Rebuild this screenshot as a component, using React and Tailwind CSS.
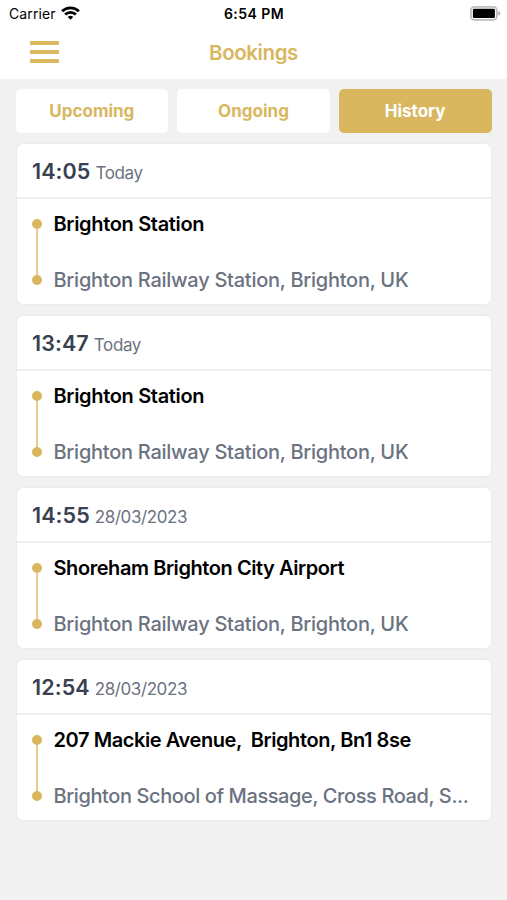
import React, { useState } from 'react';
import clsx from 'clsx';

const TABS = ['Upcoming', 'Ongoing', 'History'];

const BOOKINGS = [
  {
    id: 1,
    time: '14:05',
    date: 'Today',
    from: 'Brighton Station',
    to: 'Brighton Railway Station, Brighton, UK',
    fromTracking: 'tracking-[-0.33px]',
    toTracking: 'tracking-[-0.26px]',
  },
  {
    id: 2,
    time: '13:47',
    date: 'Today',
    from: 'Brighton Station',
    to: 'Brighton Railway Station, Brighton, UK',
    fromTracking: 'tracking-[-0.33px]',
    toTracking: 'tracking-[-0.26px]',
  },
  {
    id: 3,
    time: '14:55',
    date: '28/03/2023',
    from: 'Shoreham Brighton City Airport',
    to: 'Brighton Railway Station, Brighton, UK',
    fromTracking: 'tracking-[-0.43px]',
    toTracking: 'tracking-[-0.26px]',
  },
  {
    id: 4,
    time: '12:54',
    date: '28/03/2023',
    from: '207 Mackie Avenue,  Brighton, Bn1 8se',
    to: 'Brighton School of Massage, Cross Road, S...',
    fromTracking: 'tracking-[-0.42px]',
    toTracking: 'tracking-[-0.4px]',
  },
];

const WifiIcon = () => (
  <svg className="mb-[2px]" width="19" height="14" viewBox="0 0 19 14" fill="none" stroke="#000" strokeWidth="2.8">
    <path d="M1.1 5.3a11.9 11.9 0 0 1 16.8 0" />
    <path d="M4.1 8.6a7.7 7.7 0 0 1 10.8 0" />
    <path d="M9.5 13.8L6.7 10.9a4.2 4.2 0 0 1 5.6 0z" fill="#000" stroke="none" />
  </svg>
);

const BatteryIcon = () => (
  <svg width="31" height="15" viewBox="0 0 31 15">
    <rect x="0.9" y="0.9" width="26" height="13" rx="3.6" fill="#fff" stroke="#bdbdbd" strokeWidth="1.8" />
    <rect x="2.9" y="2.8" width="22" height="9.2" rx="1.2" fill="#000" />
    <path d="M28.4 5.2c1.2.4 1.8 1.2 1.8 2.2s-.6 1.8-1.8 2.2z" fill="#a6a6a6" />
  </svg>
);

const StatusBar = () => (
  <div className="grid h-[27px] grid-cols-3 items-center pl-[9px] pr-[6px] text-[14px] leading-[27px] text-black">
    <div className="flex items-center gap-[5.5px]">
      <span className="tracking-[0.1px]">Carrier</span>
      <WifiIcon />
    </div>
    <span className="pr-[2px] text-center font-semibold tracking-[0.45px]">6:54 PM</span>
    <div className="flex justify-end">
      <BatteryIcon />
    </div>
  </div>
);

const BookingCard = ({ booking }) => (
  <div className="h-[160px] rounded-[6px] bg-white shadow-[0_0_2px_rgba(0,0,0,0.08)]">
    <div className="flex h-[55px] items-baseline gap-[5px] border-b-2 border-[#eeeff0] pl-[15.5px] leading-[54px]">
      <span className="text-[21.5px] font-semibold tracking-[0.1px] text-[#374151]">{booking.time}</span>
      <span className="text-[17px] tracking-[-0.4px] text-[#6b7280]">{booking.date}</span>
    </div>
    <div className="flex pl-[15px] pt-[13px]">
      <div className="flex flex-col items-center pt-[7px]">
        <span className="size-[10px] rounded-full bg-[#d8b75f]" />
        <span className="h-[46px] w-[2px] bg-[#e5cd8e]" />
        <span className="size-[10px] rounded-full bg-[#d8b75f]" />
      </div>
      <div className="flex flex-col gap-[32px] pl-[12px] text-[20px] leading-[24px]">
        <span className={clsx('whitespace-pre font-semibold text-black', booking.fromTracking)}>{booking.from}</span>
        <span className={clsx('whitespace-pre font-medium text-[#6b7280]', booking.toTracking)}>{booking.to}</span>
      </div>
    </div>
  </div>
);

const App = () => {
  const [active, setActive] = useState('History');

  return (
    <div className="h-[900px] w-[507px] overflow-hidden bg-[#f1f1f1] font-['Inter',sans-serif]">
      <header className="h-[79px] bg-white">
        <StatusBar />
        <div className="grid h-[50px] grid-cols-3 items-center">
          <button className="ml-[30px] flex w-[29px] flex-col gap-[5px]" aria-label="Menu">
            <span className="h-[4px] rounded-[1px] bg-[#d8b75f]" />
            <span className="h-[4px] rounded-[1px] bg-[#d8b75f]" />
            <span className="h-[4px] rounded-[1px] bg-[#d8b75f]" />
          </button>
          <h1 className="pt-[2px] text-center text-[20.5px] font-semibold tracking-[-0.4px] text-[#d8b75f]">Bookings</h1>
        </div>
      </header>

      <div className="grid grid-cols-3 gap-[9px] px-[15.5px] pt-[10px]">
        {TABS.map((tab) => (
          <button
            key={tab}
            onClick={() => setActive(tab)}
            className={clsx(
              'h-[44px] rounded-[5px] pt-[2px] text-[17px] font-bold',
              active === tab ? 'bg-[#d8b75f] text-white' : 'bg-white text-[#d8b75f]'
            )}
          >
            {tab}
          </button>
        ))}
      </div>

      <div className="flex flex-col gap-[12.2px] px-[16.5px] pt-[10.8px]">
        {BOOKINGS.map((booking) => (
          <BookingCard key={booking.id} booking={booking} />
        ))}
      </div>
    </div>
  );
};

export default App;
